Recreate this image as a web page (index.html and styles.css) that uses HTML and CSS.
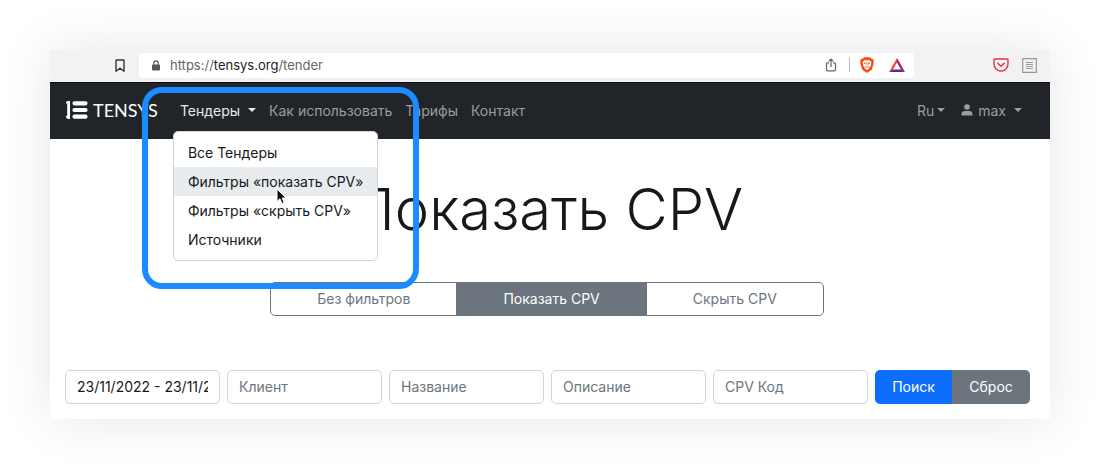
FILE: index.html
```html
<!DOCTYPE html>
<html lang="ru">
<head>
<meta charset="utf-8">
<title>Tensys</title>
<meta name="viewport" content="width=device-width, initial-scale=1">
<link rel="stylesheet" href="styles.css">
</head>
<body>
<div class="window">
  <header class="browser-bar">
    <button class="icon-button" type="button" aria-label="Закладка">
      <svg width="10" height="13" viewBox="0 0 10 13"><path d="M1 1.500Q1 1 1.500 1h7q.5 0 .5.5v10.700L5 9.200 1 12.200z" fill="none" stroke="#333" stroke-width="1.400" stroke-linejoin="round"/></svg>
    </button>
    <div class="address">
      <svg width="8" height="11" viewBox="0 0 8 11"><rect y="4.500" width="8" height="6" rx="1" fill="#555"/><path d="M1.800 5V3a2.200 2.200 0 0 1 4.400 0v2" fill="none" stroke="#555" stroke-width="1.200"/></svg>
      <span class="url">https://<b>tensys.org</b>/tender</span>
      <span class="address-tools">
        <button class="icon-button" type="button" aria-label="Поделиться">
          <svg width="12" height="14" viewBox="0 0 12 14"><path d="M4 4.800H2.500q-1 0-1 1v6q0 1 1 1h7q1 0 1-1v-6q0-1-1-1H8M6 9V1.200M3.700 3.400 6 1.100l2.300 2.300" fill="none" stroke="#666" stroke-width="1.200"/></svg>
        </button>
        <span class="divider"></span>
        <button class="icon-button" type="button" aria-label="Brave Shields">
          <svg width="14" height="16" viewBox="0 0 14 16"><path d="M4 .3h6l1.500 1.500 1.200-.1L14 4l-.5 1.500.2 1.200-2 6L7 16l-4.700-3.300-2-6 .2-1.200L0 4l1.300-2.300 1.200.1z" fill="#fb4a13"/><path d="M4.500 3 7 3.500 9.500 3l2 2.300-.6 1.700.1 1.700L9 10.500l.3 1L7 13.300l-2.300-1.800.3-1L3 8.700 3.100 7l-.6-1.700z" fill="#fff"/><path d="m4 5.800 1.900.5-.3.900zM10 5.800l-1.900.5.3.9zM7 5v3.500M5 9l2 1.300L9 9" fill="none" stroke="#fb4a13" stroke-width=".7"/></svg>
        </button>
        <button class="icon-button" type="button" aria-label="Brave Rewards">
          <svg width="16" height="14" viewBox="0 0 16 14"><path d="M8 0 0 14l4-2.500L8 4.600z" fill="#ff4724"/><path d="m8 0 8 14-4-2.500L8 4.600z" fill="#9e1f63"/><path d="M0 14h16l-4-2.500H4z" fill="#562d91"/></svg>
        </button>
      </span>
    </div>
    <div class="extensions">
      <button class="icon-button" type="button" aria-label="Pocket">
        <svg width="16" height="14" viewBox="0 0 16 14"><path d="M2 1h12q1 0 1 1v4a7 7 0 0 1-14 0V2q0-1 1-1z" fill="none" stroke="#e5304f" stroke-width="1.400"/><path d="m4.800 5.200 3.200 3 3.200-3" fill="none" stroke="#e5304f" stroke-width="1.500" stroke-linecap="round" stroke-linejoin="round"/></svg>
      </button>
      <button class="icon-button" type="button" aria-label="Боковая панель">
        <svg width="15" height="15" viewBox="0 0 15 15"><path d="M.7.700h13.600v13.600H.7z" fill="none" stroke="#999" stroke-width="1.200"/><path d="M4 4.500h7M4 6.500h7M4 8.500h7M4 10.500h7" stroke="#999" stroke-width="1"/></svg>
      </button>
    </div>
  </header>

  <nav class="navbar">
    <a class="brand" href="#">
      <svg width="22" height="18" viewBox="0 0 22 18"><path d="M0 16.200v-1.400h1.200V2.400H0V1L1.600 0H4v18H1.800z" fill="#fff"/><path d="M8.500 2.300h11M8.500 9h11M8.500 15.700h11" stroke="#fff" stroke-width="4.200" stroke-linecap="round"/></svg>
      <span>TENSYS</span>
    </a>
    <ul class="menu">
      <li class="menu-item">
        <a class="menu-link current caret" href="#" aria-expanded="true">Тендеры</a>
        <ul class="dropdown">
          <li><a class="dropdown-link" href="#">Все Тендеры</a></li>
          <li><a class="dropdown-link hovered" href="#">Фильтры «показать CPV»</a></li>
          <li><a class="dropdown-link" href="#">Фильтры «скрыть CPV»</a></li>
          <li><a class="dropdown-link" href="#">Источники</a></li>
        </ul>
        <svg class="pointer" width="12" height="17" viewBox="0 0 12 17"><path d="M1 1v12.500l2.900-2.700 2 4.700 2.300-1-2-4.500h4z" fill="#111" stroke="#fff" stroke-width="1"/></svg>
      </li>
      <li><a class="menu-link" href="#">Как использовать</a></li>
      <li><a class="menu-link" href="#">Тарифы</a></li>
      <li><a class="menu-link" href="#">Контакт</a></li>
    </ul>
    <ul class="menu account">
      <li><a class="menu-link caret tight" href="#">Ru</a></li>
      <li><a class="menu-link caret" href="#"><svg class="user" width="12" height="12" viewBox="0 0 12 12"><circle cx="6" cy="3" r="2.800" fill="currentColor"/><path d="M.5 11.500v-1.200Q.5 7 4 7h4q3.500 0 3.500 3.300v1.200z" fill="currentColor"/></svg>max</a></li>
    </ul>
  </nav>

  <main class="page">
    <h1 class="title">Показать CPV</h1>
    <div class="tabs">
      <button class="tab" type="button">Без фильтров</button>
      <button class="tab active" type="button">Показать CPV</button>
      <button class="tab" type="button">Скрыть CPV</button>
    </div>
    <form class="filters">
      <input class="field" type="text" aria-label="Период" value="23/11/2022 - 23/11/2022">
      <input class="field" type="text" aria-label="Клиент" placeholder="Клиент">
      <input class="field" type="text" aria-label="Название" placeholder="Название">
      <input class="field" type="text" aria-label="Описание" placeholder="Описание">
      <input class="field" type="text" aria-label="CPV Код" placeholder="CPV Код">
      <div class="actions">
        <button class="action search" type="button">Поиск</button>
        <button class="action reset" type="reset">Сброс</button>
      </div>
    </form>
  </main>
  <div class="highlight"></div>
</div>
</body>
</html>
```
FILE: styles.css
```css
* { box-sizing: border-box; }

body {
  margin: 0;
  padding: 50px;
  background: #fff;
  color: #16191c;
  font: 14px/21px Inter, "Liberation Sans", sans-serif;
}

button, input { font: inherit; }
a { color: inherit; text-decoration: none; }
ul { list-style: none; margin: 0; padding: 0; }
svg { display: block; flex: none; }

.window {
  position: relative;
  background: #fff;
  box-shadow: 0 0 50px rgba(0, 0, 0, .1);
}

.browser-bar {
  display: flex;
  align-items: center;
  height: 32px;
  padding: 0 13px 2px 65px;
  background: #f2f2f2;
}

.icon-button {
  display: flex;
  padding: 0;
  border: 0;
  background: none;
}

.address {
  display: flex;
  flex: 1;
  align-items: center;
  gap: 10px;
  height: 25px;
  margin: 0 79px 0 14px;
  padding: 0 9px 0 13px;
  border-radius: 4px;
  background: #fff;
  color: #666;
  font-size: 13px;
}

.url b { color: #222; font-weight: 400; }

.address-tools {
  display: flex;
  align-items: center;
  gap: 12px;
  margin-left: auto;
}

.divider { width: 1px; height: 14px; margin-right: -2px; background: #bbb; }
.divider + .icon-button { margin-right: 3px; }

.extensions { display: flex; align-items: center; gap: 13px; }

.navbar {
  display: flex;
  align-items: center;
  height: 57px;
  padding: 0 28px 2px 16px;
  border-top: 1px solid #0b0e11;
  background: #212529;
  color: #9b9d9f;
}

.brand {
  display: flex;
  align-items: center;
  gap: 5px;
  margin-right: 22px;
  color: #fff;
  font: 18px/24px Lato, sans-serif;
}

.menu { display: flex; gap: 13px; }
.menu-item { position: relative; }
.account { gap: 16px; margin-left: auto; }
.menu-link { display: flex; align-items: center; }
.current { color: #e8e9ea; }
.user { margin-right: 5px; }

.caret::after {
  content: "";
  margin-left: 8px;
  border: 4px solid transparent;
  border-top-color: currentColor;
  border-bottom: 0;
}

.tight::after { margin-left: 3px; }

.dropdown {
  position: absolute;
  z-index: 1;
  top: 31px;
  left: -7px;
  width: 205px;
  padding: 6px 0;
  border: 1px solid #d3d3d4;
  border-radius: 5px;
  background: #fff;
  color: #16191c;
}

.dropdown-link { display: block; padding: 4px 14px; white-space: nowrap; }
.hovered { background: #e9ecef; }

.pointer {
  position: absolute;
  z-index: 2;
  top: 88px;
  left: 96px;
}

.page { padding: 32px 20px 15px 15px; }

.title {
  margin: 0 0 35px;
  font-size: 58px;
  font-weight: 300;
  line-height: 76px;
  text-align: center;
}

.tabs { display: flex; justify-content: center; margin-bottom: 54px; }

.tab {
  margin-left: -1px;
  padding: 5px 46px 6px;
  border: 1px solid #6c757d;
  background: #fff;
  color: #6c757d;
}

.tab:first-child { border-radius: 5px 0 0 5px; }
.tab:last-child { border-radius: 0 5px 5px 0; }
.tab.active { background: #6c757d; color: #fff; }

.filters { display: grid; grid-template-columns: repeat(6, 1fr); gap: 7px; }

.field {
  min-width: 0;
  width: 100%;
  height: 34px;
  padding: 0 11px 1px;
  border: 1px solid #ced4da;
  border-radius: 5px;
  background: #fff;
  color: #16191c;
}

.field::placeholder { color: #6c757d; opacity: 1; }

.actions { display: flex; }

.action { flex: 1 1 auto; padding: 0 0 1px; border: 0; color: #fff; }
.search { border-radius: 5px 0 0 5px; background: #0d6efd; }
.reset { border-radius: 0 5px 5px 0; background: #6c757d; }

.highlight {
  position: absolute;
  z-index: 3;
  top: 37px;
  left: 92px;
  width: 277px;
  height: 202px;
  border: 6px solid #1a8cff;
  border-radius: 20px;
  pointer-events: none;
}
```
